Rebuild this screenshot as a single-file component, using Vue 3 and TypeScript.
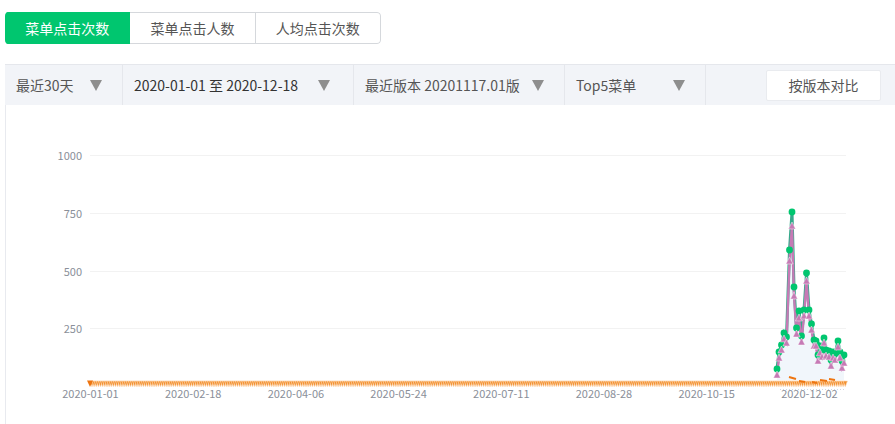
<template>
  <div class="page">
    <div class="tabs">
      <button
        v-for="(tab, i) in tabs"
        :key="tab"
        class="tab"
        :class="{ active: i === 0 }"
      >
        {{ tab }}
      </button>
    </div>

    <div class="panel">
      <div class="toolbar">
        <div class="cell cell-range"><span>最近30天</span><i class="caret"></i></div>
        <div class="cell cell-date"><span class="dark">2020-01-01 至 2020-12-18</span><i class="caret"></i></div>
        <div class="cell cell-version"><span>最近版本 20201117.01版</span><i class="caret"></i></div>
        <div class="cell cell-top"><span>Top5菜单</span><i class="caret"></i></div>
        <div class="toolbar-right">
          <button class="compare-btn">按版本对比</button>
        </div>
      </div>

      <svg class="chart" width="889" height="319" viewBox="6 105 889 319">
        <g v-for="tick in yTicks" :key="tick.label">
          <line class="grid" x1="90" :y1="tick.y" x2="846" :y2="tick.y" />
          <text class="axis-label" x="82" :y="tick.y + 4" text-anchor="end">{{ tick.label }}</text>
        </g>
        <text
          v-for="tick in xTicks"
          :key="tick.label"
          class="axis-label"
          :x="tick.x"
          y="398"
          text-anchor="middle"
        >{{ tick.label }}</text>

        <polygon class="area" :points="areaPoints" />

        <!-- orange series, one marker per day -->
        <polygon
          v-for="p in orangeMarks"
          :key="p"
          class="orange-mark"
          :points="p"
        />
        <polygon class="orange-first" points="87,380.5 93,380.5 90,387" />
        <path class="orange-dash" d="M789 377l7 2M799 381l6 1M812 382l5 1M820 380l7 1M829 379l6 1" />
        <line class="axis-dots" x1="780" y1="389.5" x2="845" y2="389.5" />

        <polyline class="line-green" :points="greenLine" />
        <polyline class="line-purple" :points="purpleLine" />

        <circle v-for="p in points" :key="'g' + p[0]" class="dot" :cx="p[0]" :cy="p[1]" r="3.4" />
        <polygon v-for="p in points" :key="'t' + p[0]" class="tri" :points="triangle(p[0], p[2])" />
      </svg>
    </div>
  </div>
</template>

<script setup lang="ts">
const tabs = ['菜单点击次数', '菜单点击人数', '人均点击次数']

const yTicks = [
  { label: '1000', y: 155.5 },
  { label: '750', y: 213.5 },
  { label: '500', y: 271.5 },
  { label: '250', y: 328.5 }
]

const xLabels = ['2020-01-01', '2020-02-18', '2020-04-06', '2020-05-24', '2020-07-11', '2020-08-28', '2020-10-15', '2020-12-02']
const xTicks = xLabels.map((label, i) => ({ label, x: 90.5 + i * 102.7 }))

// x, green value y, purple value y
const points: number[][] = [
  [777, 369, 375], [779, 352, 358], [781.5, 345, 350], [784, 333, 339],
  [786.5, 337, 343], [789.5, 250, 261], [792, 212, 226], [794, 287, 296],
  [796.5, 328, 334], [799, 311, 318], [801.5, 336, 342], [804, 310, 316],
  [806.5, 273, 281], [809, 310, 316], [811.5, 324, 330], [814, 340, 346],
  [816, 341, 346], [818, 355, 361], [820, 346, 353], [822, 350, 357],
  [824, 338, 343], [826, 350, 356], [829, 351, 357], [831, 360, 366],
  [833, 352, 358], [835, 354, 360], [838, 341, 347], [840, 352, 358],
  [842, 361, 368], [844, 355, 363]
]

const greenLine = points.map(p => `${p[0]},${p[1]}`).join(' ')
const purpleLine = points.map(p => `${p[0]},${p[2]}`).join(' ')
const areaPoints = `777,380 ${purpleLine} 844,380`

const triangle = (x: number, y: number) => `${x - 3.6},${y + 3} ${x + 3.6},${y + 3} ${x},${y - 4}`

const orangeMarks: string[] = []
for (let x = 92; x < 846; x += 2.14) {
  orangeMarks.push(`${x - 2.2},381 ${x + 2.2},381 ${x},387`)
}
</script>

<style scoped>
.page {
  width: 895px;
  height: 424px;
  overflow: hidden;
  background: #fff;
  font-family: "Noto Sans CJK SC", "Liberation Sans", sans-serif;
  font-size: 14px;
  color: #555;
}

.tabs {
  display: flex;
  width: 376px;
  margin: 12px 0 20px 5px;
  border-radius: 4px;
  overflow: hidden;
}

.tab {
  flex: 1;
  height: 32px;
  padding: 0;
  border: 1px solid #d5d8dc;
  border-left: none;
  background: #fff;
  color: #555;
  font: inherit;
}

.tab:last-child {
  border-radius: 0 4px 4px 0;
}

.tab.active {
  background: #00c66f;
  border-color: #00c66f;
  color: #fff;
}

.panel {
  margin-left: 5px;
  border-left: 1px solid #e8eaef;
}

.toolbar {
  display: flex;
  height: 41px;
  margin-left: -1px;
  background: #f2f4f8;
  border-top: 1px solid #e5e7ec;
  box-sizing: border-box;
}

.cell {
  display: flex;
  align-items: center;
  justify-content: space-between;
  box-sizing: border-box;
  padding: 0 20px 0 11px;
  border-right: 1px solid #e5e7ec;
}

.cell-range { width: 118px; }
.cell-date { width: 231px; padding-right: 23px; }
.cell-version { width: 211px; padding-right: 20px; }
.cell-top { width: 141px; }

.dark { color: #333; }

.caret {
  width: 0;
  height: 0;
  border-left: 6px solid transparent;
  border-right: 6px solid transparent;
  border-top: 11px solid #8e8e8e;
}

.toolbar-right {
  flex: 1;
  display: flex;
  align-items: center;
  justify-content: flex-end;
  padding-right: 14px;
}

.compare-btn {
  width: 115px;
  height: 31px;
  padding: 0;
  border: 1px solid #e9ebef;
  border-radius: 2px;
  background: #fff;
  color: #555;
  font: inherit;
}

.chart {
  display: block;
}

.grid {
  stroke: #f2f2f2;
  stroke-width: 1;
}

.axis-label {
  fill: #8a8f99;
  font-size: 11px;
  font-family: "Noto Sans CJK SC", "Liberation Sans", sans-serif;
}

.area {
  fill: #f1f6fb;
}

.orange-mark {
  fill: #f3902f;
  stroke: #fde3c8;
  stroke-width: 0.6;
}

.orange-first {
  fill: #ee7510;
}

.orange-dash {
  fill: none;
  stroke: #ee7510;
  stroke-width: 2;
}

.axis-dots {
  stroke: #cfd6e0;
  stroke-width: 1;
  stroke-dasharray: 1 2;
}

.line-green {
  fill: none;
  stroke: #35a98a;
  stroke-width: 3;
}

.line-purple {
  fill: none;
  stroke: #c67ab5;
  stroke-width: 2.4;
}

.dot {
  fill: #00c66f;
}

.tri {
  fill: #c67ab5;
  stroke: #fff;
  stroke-opacity: 0.65;
  stroke-width: 0.7;
}
</style>
